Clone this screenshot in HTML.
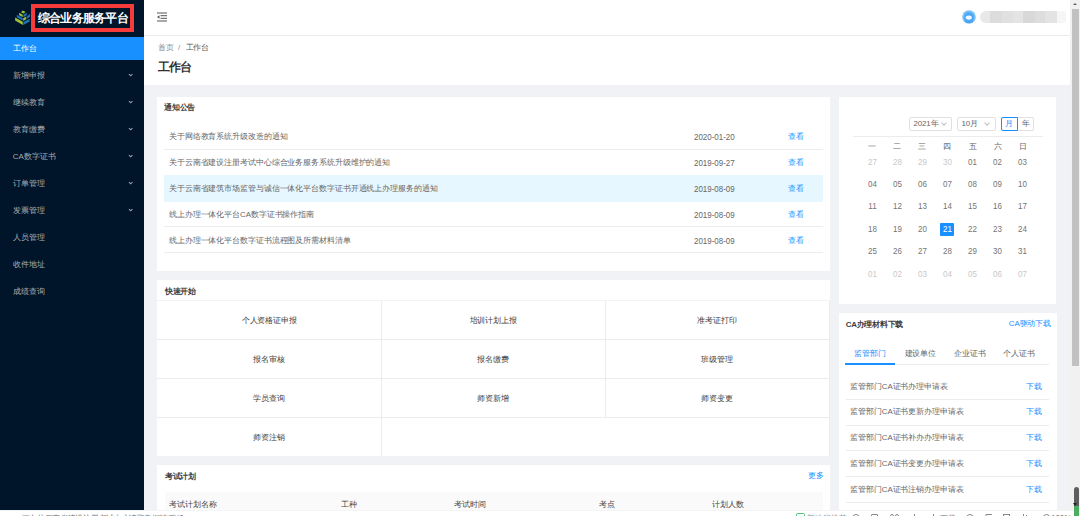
<!DOCTYPE html>
<html><head><meta charset="utf-8">
<style>
*{box-sizing:border-box;margin:0;padding:0}
html,body{width:1080px;height:516px;overflow:hidden;background:#f0f2f5;font-family:"Liberation Sans",sans-serif;color:#666}
.abs{position:absolute}
#side{left:0;top:0;width:144px;height:516px;background:#001529}
#logo-box{left:31px;top:4.1px;width:103.1px;height:27.9px;border:4.3px solid #f73b3b}
#logo-text{left:37.9px;top:9.8px;font-size:12px;font-weight:bold;color:#fff;line-height:16px;white-space:nowrap;letter-spacing:-0.75px}
.mi{position:absolute;left:0;width:144px;height:22.5px;line-height:24.5px;padding-left:12.8px;font-size:7.9px;color:rgba(255,255,255,.65);white-space:nowrap}
.mi.act{background:#1890ff;color:#fff}
.arr{position:absolute;left:129.3px;width:3.4px;height:3.4px;border-right:1px solid rgba(255,255,255,.6);border-bottom:1px solid rgba(255,255,255,.6);transform:rotate(45deg)}
#header{left:144px;top:0;width:926px;height:36px;background:#fff;border-bottom:1px solid #ececec}
#pagehead{left:144px;top:36px;width:926px;height:49px;background:#fff}
.card{position:absolute;background:#fff}
.ctitle{position:absolute;font-size:7.9px;font-weight:bold;color:#3c3c3c;letter-spacing:-0.25px;white-space:nowrap;line-height:10px}
.t{position:absolute;white-space:nowrap;font-size:7.9px;line-height:10px;letter-spacing:-0.1px}
.hl{position:absolute;height:1px;background:#ececec}
.vl{position:absolute;width:1px;background:#ececec}
.link{color:#1890ff}
.num{font-size:9.6px;letter-spacing:0;transform:scaleX(.83)}
.num.l{transform-origin:0 50%}
#scroll{left:1070px;top:0;width:10px;height:510px;background:#f1f1f1}
#thumb{left:1071.5px;top:8.5px;width:7.5px;height:357.5px;background:#c1c1c1}
#status{left:0;top:510px;width:1073.8px;height:6px;background:#fff}
</style></head><body>
<div id="side" class="abs">
  <svg class="abs" style="left:10px;top:5px" width="25" height="25" viewBox="0 0 516 516">
    <g fill="#9cc23a"><polygon points="225,150 265,116 322,146 280,178"/><polygon points="188,160 262,200 262,250 188,210"/><polygon points="272,272 335,238 335,294 272,330"/><polygon points="106,256 265,346 265,412 106,320"/></g>
    <g fill="#1f72b8"><polygon points="275,200 345,160 345,212 275,252"/><polygon points="140,202 262,270 262,322 140,254"/><polygon points="350,234 412,188 412,242 350,284"/><polygon points="275,352 405,282 405,342 275,414"/></g>
  </svg>
  <div id="logo-box" class="abs"></div>
  <div id="logo-text" class="abs">综合业务服务平台</div>
  <div class="mi act" style="top:37.1px">工作台</div>
  <div class="mi" style="top:64.1px">新增申报</div><div class="arr" style="top:72.9px"></div>
  <div class="mi" style="top:91.1px">继续教育</div><div class="arr" style="top:99.9px"></div>
  <div class="mi" style="top:118.1px">教育缴费</div><div class="arr" style="top:126.9px"></div>
  <div class="mi" style="top:145.1px">CA数字证书</div><div class="arr" style="top:153.9px"></div>
  <div class="mi" style="top:172.1px">订单管理</div><div class="arr" style="top:180.9px"></div>
  <div class="mi" style="top:199.1px">发票管理</div><div class="arr" style="top:207.9px"></div>
  <div class="mi" style="top:226.1px">人员管理</div>
  <div class="mi" style="top:253.1px">收件地址</div>
  <div class="mi" style="top:280.1px">成绩查询</div>
</div>

<div id="header" class="abs">
  <svg class="abs" style="left:13px;top:12px" width="10" height="10" viewBox="0 0 10 10">
    <rect x="0" y="0.5" width="10" height="1" fill="#555"/>
    <rect x="3.5" y="3.2" width="6.5" height="1" fill="#555"/>
    <rect x="3.5" y="5.8" width="6.5" height="1" fill="#555"/>
    <rect x="0" y="8.5" width="10" height="1" fill="#555"/>
    <path d="M0 5 L2.5 3.3 L2.5 6.7Z" fill="#555"/>
  </svg>
  <svg class="abs" style="left:818px;top:10px" width="14" height="14" viewBox="0 0 14 14">
    <circle cx="7" cy="7" r="6.8" fill="#7cc0f8"/>
    <circle cx="7" cy="7.2" r="5" fill="#4ba8f5"/>
    <path d="M3 10.5 Q7 13.5 11 10.5 L11 12 Q7 14 3 12Z" fill="#2b8be8" opacity=".7"/>
    <ellipse cx="6.8" cy="7.6" rx="3.1" ry="2.1" fill="#eef6ff"/>
  </svg>
  <div class="abs" style="left:836px;top:11px;width:86px;height:11.5px;border-radius:6px 3px 3px 6px;background:linear-gradient(90deg,#e8e8e8 0,#e8e8e8 10px,#dcdcdc 10px,#dcdcdc 21.5px,#e0e0e0 21.5px,#e0e0e0 32.5px,#e4e4e4 32.5px,#e4e4e4 43.5px,#d8d8d8 43.5px,#d8d8d8 55.5px,#dddddd 55.5px,#dddddd 65.5px,#e3e3e3 65.5px,#e3e3e3 77.5px,#f6f6f6 77.5px)"></div>
</div>
<div id="pagehead" class="abs">
  <div class="t" style="left:13.7px;top:7.3px;color:#8c8c8c">首页</div><div class="t" style="left:34px;top:7.3px;color:#8c8c8c">/</div><div class="t" style="left:41.5px;top:7.3px;color:#595959">工作台</div>
  <div class="t" style="left:13.8px;top:23.6px;font-size:12px;letter-spacing:-0.8px;line-height:14px;font-weight:bold;color:#303030">工作台</div>
</div>

<!-- notice card -->
<div class="card" style="left:157.3px;top:97px;width:672.7px;height:174px">
  <div class="ctitle" style="left:6.8px;top:5.5px">通知公告</div>
    <div class="hl" style="left:7.2px;top:52.4px;width:658.8px"></div>
  <div class="hl" style="left:7.2px;top:78px;width:658.8px"></div>
  <div class="hl" style="left:7.2px;top:104px;width:658.8px"></div>
  <div class="hl" style="left:7.2px;top:129.4px;width:658.8px"></div>
  <div class="hl" style="left:7.2px;top:155.2px;width:658.8px"></div>
<div class="abs" style="left:7.2px;top:77.6px;width:658.8px;height:27px;background:#e6f7ff"></div>
  <div class="t" style="left:11.7px;top:35.4px">关于网络教育系统升级改造的通知</div>
  <div class="t" style="left:11.7px;top:61.2px">关于云南省建设注册考试中心综合业务服务系统升级维护的通知</div>
  <div class="t" style="left:11.7px;top:87.2px">关于云南省建筑市场监管与诚信一体化平台数字证书开通线上办理服务的通知</div>
  <div class="t" style="left:11.7px;top:113px">线上办理一体化平台CA数字证书操作指南</div>
  <div class="t" style="left:11.7px;top:139px">线上办理一体化平台数字证书流程图及所需材料清单</div>
  <div class="t num l" style="left:536.5px;top:35.1px">2020-01-20</div>
  <div class="t num l" style="left:536.5px;top:60.900000000000006px">2019-09-27</div>
  <div class="t num l" style="left:536.5px;top:86.9px">2019-08-09</div>
  <div class="t num l" style="left:536.5px;top:112.7px">2019-08-09</div>
  <div class="t num l" style="left:536.5px;top:138.7px">2019-08-09</div>
  <div class="t link" style="left:631px;top:35.4px">查看</div>
  <div class="t link" style="left:631px;top:61.2px">查看</div>
  <div class="t link" style="left:631px;top:87.2px">查看</div>
  <div class="t link" style="left:631px;top:113px">查看</div>
  <div class="t link" style="left:631px;top:139px">查看</div>
</div>

<!-- quick start -->
<div class="card" style="left:157.3px;top:280px;width:672.7px;height:176px">
  <div class="ctitle" style="left:7.5px;top:6.5px">快速开始</div>
  <div class="hl" style="left:0;top:20px;width:673px;height:1.3px;background:#f3f3f3"></div>
  <div class="hl" style="left:0;top:59.2px;width:673px"></div>
  <div class="hl" style="left:0;top:98.3px;width:673px"></div>
  <div class="hl" style="left:0;top:137px;width:673px"></div>
  <div class="vl" style="left:224px;top:21px;height:155px"></div>
  <div class="vl" style="left:447.5px;top:21px;height:116px"></div>
  <div class="vl" style="left:672px;top:21px;height:155px"></div>
  <div class="t" style="left:0;width:224px;text-align:center;top:36px;color:#3a3a3a">个人资格证申报</div>
  <div class="t" style="left:224px;width:224px;text-align:center;top:36px;color:#3a3a3a">培训计划上报</div>
  <div class="t" style="left:447.5px;width:224px;text-align:center;top:36px;color:#3a3a3a">准考证打印</div>
  <div class="t" style="left:0;width:224px;text-align:center;top:75px;color:#3a3a3a">报名审核</div>
  <div class="t" style="left:224px;width:224px;text-align:center;top:75px;color:#3a3a3a">报名缴费</div>
  <div class="t" style="left:447.5px;width:224px;text-align:center;top:75px;color:#3a3a3a">班级管理</div>
  <div class="t" style="left:0;width:224px;text-align:center;top:114px;color:#3a3a3a">学员查询</div>
  <div class="t" style="left:224px;width:224px;text-align:center;top:114px;color:#3a3a3a">师资新增</div>
  <div class="t" style="left:447.5px;width:224px;text-align:center;top:114px;color:#3a3a3a">师资变更</div>
  <div class="t" style="left:0;width:224px;text-align:center;top:152.5px;color:#3a3a3a">师资注销</div>
</div>

<!-- exam plan -->
<div class="card" style="left:157.3px;top:465px;width:672.7px;height:60px">
  <div class="ctitle" style="left:7.5px;top:6.5px">考试计划</div>
  <div class="t link" style="left:650.5px;top:6px">更多</div>
  <div class="abs" style="left:7.4px;top:27px;width:658.4px;height:30px;background:#fafafa"></div>
  <div class="t" style="left:12px;top:34.5px;color:#434343">考试计划名称</div>
  <div class="t" style="left:184px;top:34.5px;color:#434343">工种</div>
  <div class="t" style="left:297px;top:34.5px;color:#434343">考试时间</div>
  <div class="t" style="left:442px;top:34.5px;color:#434343">考点</div>
  <div class="t" style="left:555px;top:34.5px;color:#434343">计划人数</div>
</div>

<!-- calendar -->
<div class="card" style="left:839px;top:97px;width:217.3px;height:206.7px">
<div class="abs" style="left:70.2px;top:20.1px;width:43px;height:14px;border:1px solid #e0e0e0;border-radius:2px"></div>
<div class="t" style="left:74.5px;top:22px;line-height:10px">2021年</div>
<div class="abs" style="left:103px;top:24px;width:4px;height:4px;border-right:1px solid #bfbfbf;border-bottom:1px solid #bfbfbf;transform:rotate(45deg)"></div>
<div class="abs" style="left:118px;top:20.1px;width:38.6px;height:14px;border:1px solid #e0e0e0;border-radius:2px"></div>
<div class="t" style="left:122.5px;top:22px;line-height:10px">10月</div>
<div class="abs" style="left:146px;top:24px;width:4px;height:4px;border-right:1px solid #bfbfbf;border-bottom:1px solid #bfbfbf;transform:rotate(45deg)"></div>
<div class="abs" style="left:162px;top:20.1px;width:32.6px;height:14px;border:1px solid #e0e0e0;border-radius:2px"></div>
<div class="abs" style="left:161.7px;top:20.1px;width:17.2px;height:14px;border:1px solid #1890ff;border-radius:2px 0 0 2px"></div>
<div class="t" style="left:166.3px;top:22px;color:#1890ff">月</div>
<div class="t" style="left:182.7px;top:22px">年</div>
<div class="hl" style="left:13.9px;top:39px;width:189.8px"></div>
<div class="t" style="left:20.5px;width:25px;text-align:center;top:44.9px">一</div>
<div class="t" style="left:45.6px;width:25px;text-align:center;top:44.9px">二</div>
<div class="t" style="left:70.8px;width:25px;text-align:center;top:44.9px">三</div>
<div class="t" style="left:95.9px;width:25px;text-align:center;top:44.9px">四</div>
<div class="t" style="left:121.1px;width:25px;text-align:center;top:44.9px">五</div>
<div class="t" style="left:146.2px;width:25px;text-align:center;top:44.9px">六</div>
<div class="t" style="left:171.3px;width:25px;text-align:center;top:44.9px">日</div>
<div class="t num" style="left:20.5px;width:25px;text-align:center;top:59.7px;color:#c8c8c8">27</div>
<div class="t num" style="left:45.6px;width:25px;text-align:center;top:59.7px;color:#c8c8c8">28</div>
<div class="t num" style="left:70.8px;width:25px;text-align:center;top:59.7px;color:#c8c8c8">29</div>
<div class="t num" style="left:95.9px;width:25px;text-align:center;top:59.7px;color:#c8c8c8">30</div>
<div class="t num" style="left:121.1px;width:25px;text-align:center;top:59.7px;color:#747474">01</div>
<div class="t num" style="left:146.2px;width:25px;text-align:center;top:59.7px;color:#747474">02</div>
<div class="t num" style="left:171.3px;width:25px;text-align:center;top:59.7px;color:#747474">03</div>
<div class="t num" style="left:20.5px;width:25px;text-align:center;top:82.1px;color:#747474">04</div>
<div class="t num" style="left:45.6px;width:25px;text-align:center;top:82.1px;color:#747474">05</div>
<div class="t num" style="left:70.8px;width:25px;text-align:center;top:82.1px;color:#747474">06</div>
<div class="t num" style="left:95.9px;width:25px;text-align:center;top:82.1px;color:#747474">07</div>
<div class="t num" style="left:121.1px;width:25px;text-align:center;top:82.1px;color:#747474">08</div>
<div class="t num" style="left:146.2px;width:25px;text-align:center;top:82.1px;color:#747474">09</div>
<div class="t num" style="left:171.3px;width:25px;text-align:center;top:82.1px;color:#747474">10</div>
<div class="t num" style="left:20.5px;width:25px;text-align:center;top:104.4px;color:#747474">11</div>
<div class="t num" style="left:45.6px;width:25px;text-align:center;top:104.4px;color:#747474">12</div>
<div class="t num" style="left:70.8px;width:25px;text-align:center;top:104.4px;color:#747474">13</div>
<div class="t num" style="left:95.9px;width:25px;text-align:center;top:104.4px;color:#747474">14</div>
<div class="t num" style="left:121.1px;width:25px;text-align:center;top:104.4px;color:#747474">15</div>
<div class="t num" style="left:146.2px;width:25px;text-align:center;top:104.4px;color:#747474">16</div>
<div class="t num" style="left:171.3px;width:25px;text-align:center;top:104.4px;color:#747474">17</div>
<div class="t num" style="left:20.5px;width:25px;text-align:center;top:126.8px;color:#747474">18</div>
<div class="t num" style="left:45.6px;width:25px;text-align:center;top:126.8px;color:#747474">19</div>
<div class="t num" style="left:70.8px;width:25px;text-align:center;top:126.8px;color:#747474">20</div>
<div class="abs" style="left:101.4px;top:125.89999999999999px;width:14px;height:13.4px;background:#1890ff;border-radius:1px"></div>
<div class="t num" style="left:95.9px;width:25px;text-align:center;top:126.8px;color:#fff">21</div>
<div class="t num" style="left:121.1px;width:25px;text-align:center;top:126.8px;color:#747474">22</div>
<div class="t num" style="left:146.2px;width:25px;text-align:center;top:126.8px;color:#747474">23</div>
<div class="t num" style="left:171.3px;width:25px;text-align:center;top:126.8px;color:#747474">24</div>
<div class="t num" style="left:20.5px;width:25px;text-align:center;top:149.1px;color:#747474">25</div>
<div class="t num" style="left:45.6px;width:25px;text-align:center;top:149.1px;color:#747474">26</div>
<div class="t num" style="left:70.8px;width:25px;text-align:center;top:149.1px;color:#747474">27</div>
<div class="t num" style="left:95.9px;width:25px;text-align:center;top:149.1px;color:#747474">28</div>
<div class="t num" style="left:121.1px;width:25px;text-align:center;top:149.1px;color:#747474">29</div>
<div class="t num" style="left:146.2px;width:25px;text-align:center;top:149.1px;color:#747474">30</div>
<div class="t num" style="left:171.3px;width:25px;text-align:center;top:149.1px;color:#747474">31</div>
<div class="t num" style="left:20.5px;width:25px;text-align:center;top:171.5px;color:#c8c8c8">01</div>
<div class="t num" style="left:45.6px;width:25px;text-align:center;top:171.5px;color:#c8c8c8">02</div>
<div class="t num" style="left:70.8px;width:25px;text-align:center;top:171.5px;color:#c8c8c8">03</div>
<div class="t num" style="left:95.9px;width:25px;text-align:center;top:171.5px;color:#c8c8c8">04</div>
<div class="t num" style="left:121.1px;width:25px;text-align:center;top:171.5px;color:#c8c8c8">05</div>
<div class="t num" style="left:146.2px;width:25px;text-align:center;top:171.5px;color:#c8c8c8">06</div>
<div class="t num" style="left:171.3px;width:25px;text-align:center;top:171.5px;color:#c8c8c8">07</div>
</div>

<!-- CA -->
<div class="card" style="left:839px;top:312.7px;width:218.2px;height:210px">
  <div class="ctitle" style="left:6.8px;top:7px">CA办理材料下载</div>
<div class="t link" style="left:169.8px;top:6.6px">CA驱动下载</div>
<div class="t link" style="left:15.4px;top:36.3px">监管部门</div>
<div class="t" style="left:65.5px;top:36.3px">建设单位</div>
<div class="t" style="left:115px;top:36.3px">企业证书</div>
<div class="t" style="left:164px;top:36.3px">个人证书</div>
<div class="hl" style="left:6.5px;top:51px;width:203.5px"></div>
<div class="abs" style="left:6.3px;top:50.6px;width:49.7px;height:1.4px;background:#1890ff"></div>
<div class="t" style="left:11.2px;top:68.90px">监管部门CA证书办理申请表</div>
<div class="t link" style="left:187.3px;top:68.90px">下载</div>
<div class="hl" style="left:6.5px;top:86.10px;width:203.5px"></div>
<div class="t" style="left:11.2px;top:94.70px">监管部门CA证书更新办理申请表</div>
<div class="t link" style="left:187.3px;top:94.70px">下载</div>
<div class="hl" style="left:6.5px;top:111.90px;width:203.5px"></div>
<div class="t" style="left:11.2px;top:120.50px">监管部门CA证书补办办理申请表</div>
<div class="t link" style="left:187.3px;top:120.50px">下载</div>
<div class="hl" style="left:6.5px;top:137.70px;width:203.5px"></div>
<div class="t" style="left:11.2px;top:146.30px">监管部门CA证书变更办理申请表</div>
<div class="t link" style="left:187.3px;top:146.30px">下载</div>
<div class="hl" style="left:6.5px;top:163.50px;width:203.5px"></div>
<div class="t" style="left:11.2px;top:172.10px">监管部门CA证书注销办理申请表</div>
<div class="t link" style="left:187.3px;top:172.10px">下载</div>
<div class="hl" style="left:6.5px;top:189.30px;width:203.5px"></div>
</div>

<div id="scroll" class="abs"></div>
<div id="thumb" class="abs"></div>
<div class="abs" style="left:1072.5px;top:2.5px;width:0;height:0;border-left:2.6px solid transparent;border-right:2.6px solid transparent;border-bottom:2.6px solid #606060"></div>
<div id="status" class="abs" style="overflow:hidden">
  <div class="abs" style="left:0;top:0;width:1080px;height:1px;background:#f4f4f4"></div>
  <div class="t" style="left:21.5px;top:3.5px;color:#666;letter-spacing:-0.3px">正在从云南省建设注册考试中心读取数据请稍候</div>
  <div class="abs" style="left:796px;top:3.3px;width:9px;height:8px;border:1px solid #4cc17a;border-radius:1.5px"></div>
  <div class="t" style="left:807px;top:3.5px;color:#777">新功能推荐</div>
  <div class="abs" style="left:851.5px;top:3.5px;width:8px;height:8px;border:1px solid #888;border-radius:50%"></div>
  <div class="abs" style="left:871px;top:3.8px;width:7px;height:7px;border:1px solid #888;border-radius:1px"></div>
  <div class="abs" style="left:890px;top:3.8px;width:4px;height:4px;border:1px solid #888;border-radius:50%"></div>
  <div class="abs" style="left:894.5px;top:3.8px;width:4px;height:4px;border:1px solid #888;border-radius:50%"></div>
  <div class="abs" style="left:913.5px;top:3.5px;width:1px;height:4px;background:#888"></div>
  <div class="abs" style="left:933px;top:3.5px;width:1px;height:4px;background:#888"></div>
  <div class="t" style="left:940px;top:3.5px;color:#777">下载</div>
  <div class="abs" style="left:966px;top:3.5px;width:8px;height:8px;border:1px solid #888;border-radius:50%"></div>
  <div class="abs" style="left:985px;top:3.5px;width:6px;height:6px;border-top:1px solid #888;border-left:1px solid #888;transform:skewX(-20deg)"></div>
  <div class="abs" style="left:1003px;top:3.6px;width:7px;height:7px;border:1px solid #888"></div>
  <div class="abs" style="left:1023px;top:3.5px;width:1px;height:4px;background:#888"></div>
  <div class="abs" style="left:1025.5px;top:4.5px;width:1px;height:3px;background:#888"></div>
  <div class="abs" style="left:1043px;top:3.6px;width:7px;height:7px;border:1px solid #888;border-radius:50%"></div>
  <div class="t num l" style="left:1051px;top:3px;color:#777">100%</div>
</div>
<div class="abs" style="left:1073.8px;top:487px;width:5.2px;height:24px;border-radius:2.6px 2.6px 0 0;background:#5e5e5e"></div>
<div class="abs" style="left:1073.8px;top:505.5px;width:5.2px;height:10.5px;background:#4caf5f"></div>
<div class="abs" style="left:1073px;top:503px;width:0;height:0;border-left:2px solid transparent;border-right:2px solid transparent;border-top:3px solid #222"></div>
<script>
(function(){
  var probe=document.createElement('span');
  probe.style.cssText='position:absolute;left:-9999px;top:0;font-size:100px;white-space:nowrap;letter-spacing:0';
  probe.textContent='\u5de5\u4f5c\u53f0\u7efc';
  document.body.appendChild(probe);
  var w=probe.getBoundingClientRect().width/4;
  document.body.removeChild(probe);
  if(Math.abs(w-100)<2) return;
  var extra=(100-w)/100;
  var re=/[\u3000-\u9fff\uff00-\uffef]+/g;
  var walker=document.createTreeWalker(document.body,NodeFilter.SHOW_TEXT,null);
  var nodes=[],n;
  while((n=walker.nextNode())){ if(/[\u3000-\u9fff\uff00-\uffef]/.test(n.nodeValue)) nodes.push(n); }
  nodes.forEach(function(t){
    var p=t.parentNode; if(!p||p.tagName==='SCRIPT') return;
    var cs=getComputedStyle(p), fs=parseFloat(cs.fontSize), ls=parseFloat(cs.letterSpacing)||0;
    var txt=t.nodeValue, frag=document.createDocumentFragment(), last=0, m;
    re.lastIndex=0;
    while((m=re.exec(txt))){
      if(m.index>last) frag.appendChild(document.createTextNode(txt.slice(last,m.index)));
      var sp=document.createElement('span');
      sp.style.letterSpacing=(ls+fs-(w/100)*fs*1.3)+'px';
      sp.style.webkitTextStroke='0.2px';sp.style.fontSize='1.3em';sp.textContent=m[0];
      frag.appendChild(sp);
      last=m.index+m[0].length;
    }
    if(last<txt.length) frag.appendChild(document.createTextNode(txt.slice(last)));
    p.replaceChild(frag,t);
  });
})();
</script>
</body></html>
